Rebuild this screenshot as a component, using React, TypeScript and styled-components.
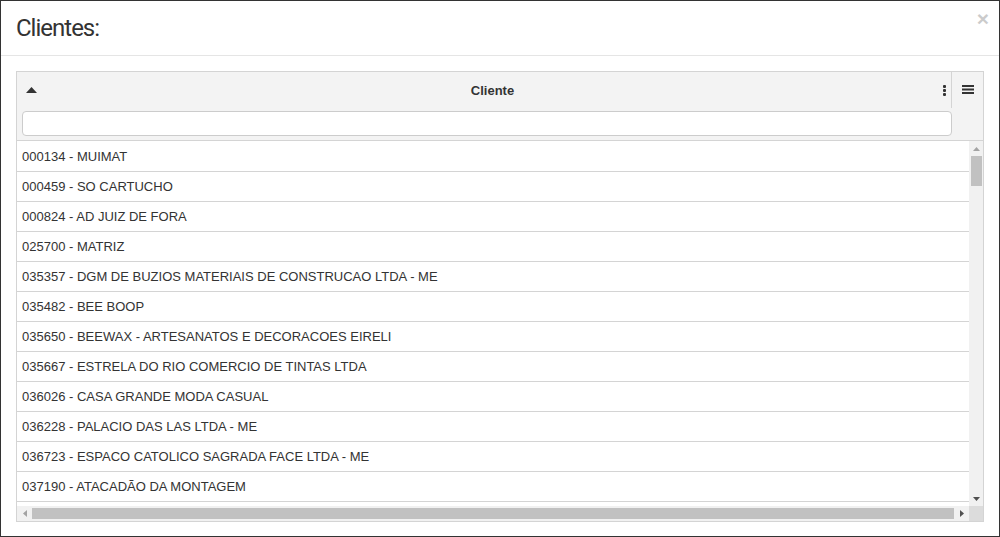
import React from "react";
import styled, { createGlobalStyle } from "styled-components";

const GlobalStyle = createGlobalStyle`
  html, body { margin: 0; padding: 0; background: #fff; }
  * { box-sizing: border-box; }
`;

const Frame = styled.div`
  width: 1000px;
  height: 537px;
  border: 1px solid #333;
  display: flex;
  flex-direction: column;
  background: #fff;
`;

const ModalHeader = styled.div`
  height: 55px;
  flex: none;
  border-bottom: 1px solid #e5e5e5;
  display: flex;
  align-items: flex-start;
  justify-content: space-between;
  padding: 0 10px 0 15px;
`;

const Title = styled.h4`
  margin: 12px 0 0 0;
  font-family: Roboto, "Liberation Sans", sans-serif;
  font-weight: 400;
  font-size: 24px;
  letter-spacing: -1px;
  line-height: 30px;
  color: #333;
`;

const Close = styled.span`
  font-family: "Liberation Sans", Arial, sans-serif;
  font-weight: 700;
  font-size: 21px;
  line-height: 21px;
  color: #000;
  opacity: 0.2;
  margin-top: 7px;
`;

const ModalBody = styled.div`
  padding: 15px;
`;

const Grid = styled.div`
  height: 451px;
  border: 1px solid #d4d4d4;
  display: flex;
  flex-direction: column;
  font-family: "Liberation Sans", Arial, sans-serif;
  font-size: 13px;
  color: #333;
`;

const GridHeader = styled.div`
  height: 69px;
  flex: none;
  background: #f3f3f3;
  border-bottom: 1px solid #d4d4d4;
  display: flex;
`;

const HeaderCell = styled.div`
  width: 935px;
  display: flex;
  flex-direction: column;
`;

const TitleRow = styled.div`
  height: 36px;
  border-right: 1px solid #d4d4d4;
  display: flex;
  align-items: center;
  padding: 0 5px 0 9px;
`;

const HeaderLabel = styled.div`
  flex: 1;
  text-align: center;
  font-weight: 700;
  padding-left: 5px;
`;

const FilterRow = styled.div`
  height: 32px;
  padding: 3px 0 4px 5px;
  display: flex;
`;

const FilterInput = styled.input`
  flex: 1;
  height: 25px;
  border: 1px solid #ccc;
  border-radius: 4px;
  background: #fff;
  outline: none;
  padding: 0 6px;
  font-family: inherit;
  font-size: 13px;
`;

const MenuCell = styled.div`
  flex: 1;
  display: flex;
  justify-content: center;
  padding-top: 13px;
`;

const GridBody = styled.div`
  flex: 1;
  display: flex;
  flex-direction: column;
`;

const BodyMain = styled.div`
  height: 365px;
  display: flex;
`;

const Viewport = styled.div`
  flex: 1;
  overflow: hidden;
  padding-top: 1px;
`;

const Row = styled.div`
  height: 30px;
  border-bottom: 1px solid #d4d4d4;
  display: flex;
  align-items: center;
  padding: 0 5px;
  white-space: nowrap;
`;

const VScroll = styled.div`
  width: 14px;
  background: #f1f1f1;
  display: flex;
  flex-direction: column;
  align-items: center;
`;

const ArrowBox = styled.div<{ $h?: number; $w?: number }>`
  width: ${(p) => p.$w ?? 14}px;
  height: ${(p) => p.$h ?? 15}px;
  display: flex;
  align-items: center;
  justify-content: center;
  flex: none;
`;

const VThumb = styled.div`
  width: 11px;
  height: 30px;
  background: #c1c1c1;
`;

const Spacer = styled.div`
  flex: 1;
`;

const BodyFoot = styled.div`
  height: 15px;
  display: flex;
`;

const HScroll = styled.div`
  flex: 1;
  background: #f1f1f1;
  display: flex;
  align-items: center;
`;

const HThumb = styled.div`
  width: 922px;
  height: 11px;
  background: #c1c1c1;
`;

const Corner = styled.div`
  width: 14px;
  background: #dcdcdc;
`;

const Tri = ({ dir, color, w, h }: { dir: "up" | "down" | "left" | "right"; color: string; w: number; h: number }) => {
  const pts =
    dir === "up"
      ? `0,${h} ${w / 2},0 ${w},${h}`
      : dir === "down"
      ? `0,0 ${w},0 ${w / 2},${h}`
      : dir === "left"
      ? `${w},0 ${w},${h} 0,${h / 2}`
      : `0,0 0,${h} ${w},${h / 2}`;
  return (
    <svg width={w} height={h} viewBox={`0 0 ${w} ${h}`} style={{ display: "block" }}>
      <polygon points={pts} fill={color} />
    </svg>
  );
};

const Kebab = () => (
  <svg width="3" height="11" viewBox="0 0 3 11" style={{ display: "block" }}>
    <rect x="0" y="0" width="3" height="3" rx="1" fill="#333" />
    <rect x="0" y="4" width="3" height="3" rx="1" fill="#333" />
    <rect x="0" y="8" width="3" height="3" rx="1" fill="#333" />
  </svg>
);

const Hamburger = () => (
  <svg width="12" height="9" viewBox="0 0 12 9" style={{ display: "block" }}>
    <rect x="0" y="0" width="12" height="2" fill="#333" />
    <rect x="0" y="3.5" width="12" height="2" fill="#333" />
    <rect x="0" y="7" width="12" height="2" fill="#333" />
  </svg>
);

const clientes = [
  "000134 - MUIMAT",
  "000459 - SO CARTUCHO",
  "000824 - AD JUIZ DE FORA",
  "025700 - MATRIZ",
  "035357 - DGM DE BUZIOS MATERIAIS DE CONSTRUCAO LTDA - ME",
  "035482 - BEE BOOP",
  "035650 - BEEWAX - ARTESANATOS E DECORACOES EIRELI",
  "035667 - ESTRELA DO RIO COMERCIO DE TINTAS LTDA",
  "036026 - CASA GRANDE MODA CASUAL",
  "036228 - PALACIO DAS LAS LTDA - ME",
  "036723 - ESPACO CATOLICO SAGRADA FACE LTDA - ME",
  "037190 - ATACADÃO DA MONTAGEM",
  "",
];

export default function App() {
  return (
    <>
      <GlobalStyle />
      <Frame>
        <ModalHeader>
          <Title>Clientes:</Title>
          <Close>×</Close>
        </ModalHeader>
        <ModalBody>
          <Grid>
            <GridHeader>
              <HeaderCell>
                <TitleRow>
                  <Tri dir="up" color="#333" w={11} h={6} />
                  <HeaderLabel>Cliente</HeaderLabel>
                  <Kebab />
                </TitleRow>
                <FilterRow>
                  <FilterInput type="text" />
                </FilterRow>
              </HeaderCell>
              <MenuCell>
                <Hamburger />
              </MenuCell>
            </GridHeader>
            <GridBody>
              <BodyMain>
                <Viewport>
                  {clientes.map((c, i) => (
                    <Row key={i}>{c}</Row>
                  ))}
                </Viewport>
                <VScroll>
                  <ArrowBox $h={15}>
                    <Tri dir="up" color="#a3a3a3" w={7} h={4} />
                  </ArrowBox>
                  <VThumb />
                  <Spacer />
                  <ArrowBox $h={15}>
                    <Tri dir="down" color="#505050" w={7} h={4} />
                  </ArrowBox>
                </VScroll>
              </BodyMain>
              <BodyFoot>
                <HScroll>
                  <ArrowBox $w={15} $h={15}>
                    <Tri dir="left" color="#a3a3a3" w={4} h={7} />
                  </ArrowBox>
                  <HThumb />
                  <Spacer />
                  <ArrowBox $w={15} $h={15}>
                    <Tri dir="right" color="#505050" w={4} h={7} />
                  </ArrowBox>
                </HScroll>
                <Corner />
              </BodyFoot>
            </GridBody>
          </Grid>
        </ModalBody>
      </Frame>
    </>
  );
}
